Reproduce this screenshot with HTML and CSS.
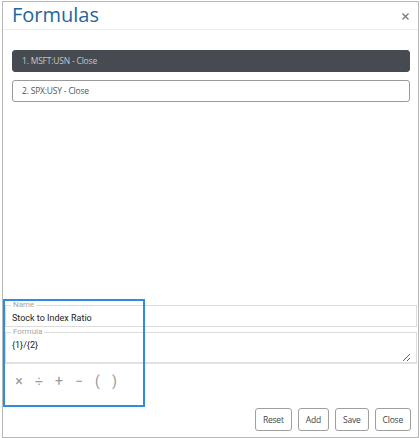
FILE: index.html
```html
<!DOCTYPE html>
<html lang="en">
<head>
    <meta charset="UTF-8">
    <title>Formulas</title>
    <link rel="stylesheet" href="styles.css">
</head>
<body>
    <div class="dialog">
        <!-- Title bar -->
        <div class="dialog-header">
            <h1 class="dialog-title">Formulas</h1>
            <span class="close-x">
                <svg width="7" height="7" viewBox="0 0 7 7"><path d="M0.5 0.5 L6.5 6.5 M6.5 0.5 L0.5 6.5" stroke="#7a7a7a" stroke-width="1.3" fill="none"/></svg>
            </span>
        </div>

        <!-- Series list -->
        <div class="series-list">
            <div class="series-item selected">1. MSFT:USN - Close</div>
            <div class="series-item">2. SPX:USY - Close</div>
        </div>

        <!-- Formula editor -->
        <div class="editor">
            <fieldset class="field">
                <legend>Name</legend>
                <input class="field-input" type="text" value="Stock to Index Ratio">
            </fieldset>
            <fieldset class="field field-formula">
                <legend>Formula</legend>
                <textarea class="field-area">{1}/{2}</textarea>
            </fieldset>
            <div class="operators">
                <span class="op">×</span>
                <span class="op">÷</span>
                <span class="op">+</span>
                <span class="op">−</span>
                <span class="op paren">(</span>
                <span class="op paren">)</span>
            </div>
            <div class="highlight"></div>
        </div>

        <div class="buttons">
            <button class="btn">Reset</button>
            <button class="btn">Add</button>
            <button class="btn">Save</button>
            <button class="btn">Close</button>
        </div>
    </div>
</body>
</html>
```

FILE: styles.css
```css
body {
    margin: 0;
    background-color: #fff;
    font-family: "Open Sans", Arial, sans-serif;
}
.dialog {
    box-sizing: border-box;
    margin: 1px 0 0 2px;
    width: 417px;
    height: 437px;
    border: 1px solid #b8b8b8;
    display: flex;
    flex-direction: column;
}
.dialog-header {
    height: 27px;
    border-bottom: 1px solid #ececec;
    display: flex;
    align-items: flex-start;
    justify-content: space-between;
    padding: 0 9px;
}
.dialog-title {
    margin: 0;
    font-size: 20px;
    line-height: 25px;
    font-weight: normal;
    color: #2266a0;
}
.close-x {
    margin-top: 11px;
    display: flex;
}
.series-list {
    flex: 1;
    padding: 20px 8px 0 9px;
    display: flex;
    flex-direction: column;
    gap: 8px;
}
.series-item {
    box-sizing: border-box;
    height: 22px;
    border: 1px solid #9a9a9a;
    border-radius: 3px;
    padding-left: 9px;
    font-size: 8.5px;
    letter-spacing: -0.2px;
    line-height: 20px;
    color: #555;
}
.series-item.selected {
    background-color: #464b51;
    border-color: #464b51;
    color: #c3c6ca;
}
/* Editor at the bottom */
.editor {
    position: relative;
    font-family: Roboto, Arial, sans-serif;
}
.field {
    margin: 0 1px 0 2px;
    padding: 0 5px;
    border: 1px solid #dcdcdc;
    min-width: 0;
}
.field legend {
    padding: 0 2px;
    font-size: 8px;
    line-height: 10px;
    color: #a6a6a6;
}
.field-input {
    display: block;
    box-sizing: border-box;
    width: 100%;
    height: 16px;
    border: none;
    padding: 0 1px;
    margin: 0;
    font-family: Roboto, Arial, sans-serif;
    font-size: 9px;
    color: #222;
    outline: none;
}
.field-formula {
    border-bottom: 2px solid #e2e2e2;
}
.field-area {
    display: block;
    box-sizing: border-box;
    width: 100%;
    height: 25px;
    border: none;
    margin: 0;
    padding: 2px 1px;
    font-family: Roboto, Arial, sans-serif;
    font-size: 9px;
    line-height: 12px;
    color: #222;
    resize: vertical;
    outline: none;
}
.operators {
    height: 34px;
    padding-left: 6px;
    display: flex;
    align-items: center;
}
.op {
    width: 20px;
    text-align: center;
    font-size: 14px;
    color: #999;
}
.op.paren {
    width: 17px;
}
/* Blue selection frame drawn over the name/formula block */
.highlight {
    position: absolute;
    top: -1px;
    left: 0;
    box-sizing: border-box;
    width: 142px;
    height: 108px;
    border: 2px solid #2e8de3;
    pointer-events: none;
}
.buttons {
    display: flex;
    justify-content: flex-end;
    gap: 6px;
    padding: 10px 7px 6px 0;
}
.btn {
    box-sizing: border-box;
    height: 23px;
    padding: 0 7px;
    border: 1px solid #a0a0a0;
    border-radius: 3px;
    background-color: #fff;
    font-family: "Open Sans", Arial, sans-serif;
    font-size: 8.5px;
    letter-spacing: -0.2px;
    color: #444;
    cursor: pointer;
}
```
